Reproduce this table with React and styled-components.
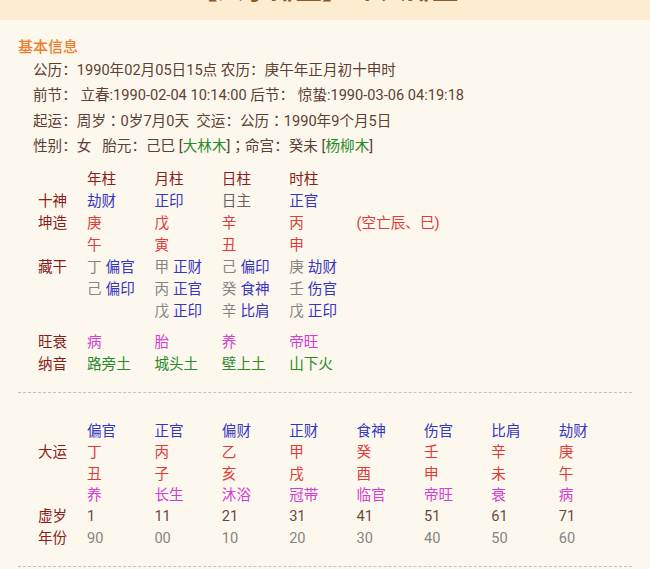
import React from "react";
import styled, { createGlobalStyle } from "styled-components";

const Global = createGlobalStyle`
  html, body { margin: 0; padding: 0; background: #fdf8ee; }
  body { font-family: Roboto, "Noto Sans CJK SC", sans-serif; }
`;

const Page = styled.div`
  width: 650px;
  min-height: 569px;
  background: #fdf8ee;
  overflow: hidden;
`;

const Header = styled.div`
  height: 20px;
  background: #fcecd0;
  overflow: hidden;
  display: flex;
  justify-content: center;
`;

const Title = styled.div`
  font-size: 26px;
  line-height: 30px;
  margin-top: -25px;
  color: #8b5a2b;
  font-weight: bold;
  white-space: nowrap;
`;

const Section = styled.div`
  padding: 0 18px;
`;

const SectionTitle = styled.div`
  color: #ee7c2a;
  font-size: 15px;
  font-weight: 500;
  line-height: 20px;
  margin-top: 17px;
`;

const InfoBlock = styled.div`
  padding-left: 15px;
  margin-top: 1px;
`;

const InfoLine = styled.div`
  color: #5e4032;
  font-size: 14.6px;
  line-height: 24.8px;
  white-space: nowrap;
`;

const Punct = styled.span`
  font-family: "Noto Sans CJK TC", sans-serif;
`;

const Green = styled.span`
  color: #2a8a2a;
`;

const Grid = styled.div`
  display: grid;
  grid-template-columns: 49px repeat(8, 67.4px);
  padding-left: 20px;
  font-size: 14.6px;
  line-height: ${(p) => p.$lh}px;
  margin-top: ${(p) => p.$mt || 0}px;
  white-space: nowrap;
`;

const Cell = styled.div`
  color: ${(p) => p.$c || "#6a4a3c"};
`;

const Sub = styled.span`
  color: ${(p) => p.$c};
  margin-left: ${(p) => p.$ml || 0}px;
`;

const Spacer = styled.div`
  grid-column: 1 / -1;
  height: ${(p) => p.$h}px;
`;

const Dashed = styled.div`
  border-top: 1px dashed #c8c4bc;
  margin-top: ${(p) => p.$mt}px;
`;

const C = {
  label: "#8b1c1c",
  blue: "#3535c4",
  red: "#e03a3a",
  gray: "#858585",
  dgray: "#6e625a",
  mag: "#d43cd4",
  green: "#2a8a2a",
  brown: "#6a4a3c",
};

const pillars = {
  head: ["年柱", "月柱", "日柱", "时柱"],
  god: ["劫财", "正印", "日主", "正官"],
  stem: ["庚", "戊", "辛", "丙"],
  branch: ["午", "寅", "丑", "申"],
  hidden: [
    [["丁", "偏官"], ["甲", "正财"], ["己", "偏印"], ["庚", "劫财"]],
    [["己", "偏印"], ["丙", "正官"], ["癸", "食神"], ["壬", "伤官"]],
    [null, ["戊", "正印"], ["辛", "比肩"], ["戊", "正印"]],
  ],
  state: ["病", "胎", "养", "帝旺"],
  nayin: ["路旁土", "城头土", "壁上土", "山下火"],
};

const dayun = {
  god: ["偏官", "正官", "偏财", "正财", "食神", "伤官", "比肩", "劫财"],
  stem: ["丁", "丙", "乙", "甲", "癸", "壬", "辛", "庚"],
  branch: ["丑", "子", "亥", "戌", "酉", "申", "未", "午"],
  state: ["养", "长生", "沐浴", "冠带", "临官", "帝旺", "衰", "病"],
  age: ["1", "11", "21", "31", "41", "51", "61", "71"],
  year: ["90", "00", "10", "20", "30", "40", "50", "60"],
};

function Row({ label, items, color, count = 8 }) {
  const cells = [];
  for (let i = 0; i < count; i++) {
    const it = items[i];
    cells.push(
      <Cell key={i} $c={typeof color === "function" ? color(i) : color}>
        {it === undefined || it === null ? "" : it}
      </Cell>
    );
  }
  return (
    <>
      <Cell $c={C.label}>{label}</Cell>
      {cells}
    </>
  );
}

export default function App() {
  return (
    <Page>
      <Global />
      <Header>
        <Title>【八字排盘】 个人排盘</Title>
      </Header>
      <Section>
        <SectionTitle>基本信息</SectionTitle>
        <InfoBlock>
          <InfoLine>公历：1990年02月05日15点 农历：庚午年正月初十申时</InfoLine>
          <InfoLine>前节：&nbsp;立春:1990-02-04 10:14:00 后节：&nbsp;惊蛰:1990-03-06 04:19:18</InfoLine>
          <InfoLine>
            起运：周岁<Punct>：</Punct>0岁7月0天&nbsp;&nbsp;交运：公历<Punct>：</Punct>1990年9个月5日
          </InfoLine>
          <InfoLine>
            性别：女&nbsp;&nbsp;&nbsp;胎元：己巳 [<Green>大林木</Green>]<Punct>；</Punct>命宫：癸未 [<Green>杨柳木</Green>]
          </InfoLine>
        </InfoBlock>

        <Grid $lh={22} $mt={9}>
          <Row label="" items={pillars.head} color={C.label} />
          <Row label="十神" items={pillars.god} color={(i) => (i === 2 ? C.dgray : C.blue)} />
          <Row label="坤造" items={[...pillars.stem, "(空亡辰、巳)"]} color={C.red} />
          <Row label="" items={pillars.branch} color={C.red} />
          {pillars.hidden.map((r, ri) => (
            <Row
              key={ri}
              label={ri === 0 ? "藏干" : ""}
              items={r.map((h) =>
                h ? (
                  <>
                    <Sub $c={C.gray}>{h[0]}</Sub>
                    <Sub $c={C.blue} $ml={4}>{h[1]}</Sub>
                  </>
                ) : null
              )}
              color={C.gray}
            />
          ))}
          <Spacer $h={9} />
          <Row label="旺衰" items={pillars.state} color={C.mag} />
          <Row label="纳音" items={pillars.nayin} color={C.green} />
        </Grid>

        <Dashed $mt={17} />

        <Grid $lh={21.3} $mt={28}>
          <Row label="" items={dayun.god} color={C.blue} />
          <Row label="大运" items={dayun.stem} color={C.red} />
          <Row label="" items={dayun.branch} color={C.red} />
          <Row label="" items={dayun.state} color={C.mag} />
          <Row label="虚岁" items={dayun.age} color={C.brown} />
          <Row label="年份" items={dayun.year} color={C.gray} />
        </Grid>

        <Dashed $mt={17} />
      </Section>
    </Page>
  );
}
